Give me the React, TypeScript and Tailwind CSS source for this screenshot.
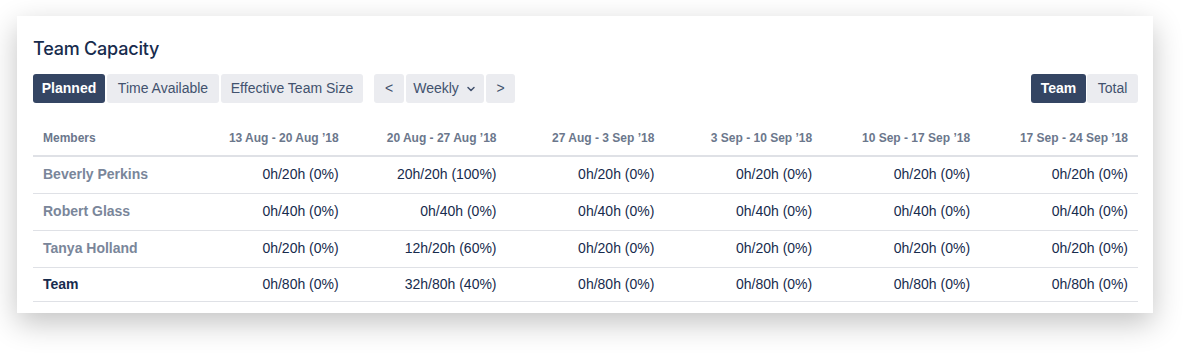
import { ChevronDown } from 'lucide-react';

const weeks = [
  '13 Aug - 20 Aug \u201918',
  '20 Aug - 27 Aug \u201918',
  '27 Aug - 3 Sep \u201918',
  '3 Sep - 10 Sep \u201918',
  '10 Sep - 17 Sep \u201918',
  '17 Sep - 24 Sep \u201918',
];

const rows = [
  { name: 'Beverly Perkins', values: ['0h/20h (0%)', '20h/20h (100%)', '0h/20h (0%)', '0h/20h (0%)', '0h/20h (0%)', '0h/20h (0%)'] },
  { name: 'Robert Glass', values: ['0h/40h (0%)', '0h/40h (0%)', '0h/40h (0%)', '0h/40h (0%)', '0h/40h (0%)', '0h/40h (0%)'] },
  { name: 'Tanya Holland', values: ['0h/20h (0%)', '12h/20h (60%)', '0h/20h (0%)', '0h/20h (0%)', '0h/20h (0%)', '0h/20h (0%)'] },
];

const teamValues = ['0h/80h (0%)', '32h/80h (40%)', '0h/80h (0%)', '0h/80h (0%)', '0h/80h (0%)', '0h/80h (0%)'];

function Btn({ label, active, className = '' }: { label: React.ReactNode; active?: boolean; className?: string }) {
  return (
    <button
      type="button"
      className={`flex h-[29px] items-center justify-center rounded-[3px] text-[14px] ${
        active ? 'bg-[#344563] font-semibold text-white' : 'bg-[#ebecf0] text-[#42526e]'
      } ${className}`}
    >
      {label}
    </button>
  );
}

export default function App() {
  return (
    <div className="h-[361px] w-[1200px] bg-white pl-[17px] pt-[16px] font-['Liberation_Sans',Arial,sans-serif] text-[#172b4d]">
      <section className="h-[297px] w-[1136px] bg-white pl-[16px] pr-[15px] pt-[22px] shadow-[0_10px_28px_rgba(0,0,0,0.24)]">
        <h2 className="font-['Inter',sans-serif] text-[18px] font-medium leading-[22px] tracking-[-0.2px] text-[#172b4d]">
          Team Capacity
        </h2>

        <div className="mt-[14px] flex items-center">
          <div className="flex gap-[2px]">
            <Btn label="Planned" active className="w-[72px]" />
            <Btn label="Time Available" className="w-[112px]" />
            <Btn label="Effective Team Size" className="w-[142px]" />
          </div>
          <div className="ml-[11px] flex gap-[2px]">
            <Btn label="<" className="w-[30px]" />
            <Btn
              label={
                <span className="flex items-center gap-[6px]">
                  Weekly <ChevronDown size={12} strokeWidth={3} />
                </span>
              }
              className="w-[78px]"
            />
            <Btn label=">" className="w-[29px]" />
          </div>
          <div className="ml-auto flex gap-[1px]">
            <Btn label="Team" active className="w-[55px]" />
            <Btn label="Total" className="w-[51px]" />
          </div>
        </div>

        <table className="mt-[18px] w-full table-fixed border-collapse">
          <thead>
            <tr className="h-[35px] border-b-2 border-[#dfe1e6] text-[12px] font-bold text-[#6b778c]">
              <th className="px-[10px] text-left font-bold">Members</th>
              {weeks.map((w) => (
                <th key={w} className="px-[10px] text-right font-bold">
                  {w}
                </th>
              ))}
            </tr>
          </thead>
          <tbody className="text-[14px]">
            {rows.map((r) => (
              <tr key={r.name} className="h-[37px] border-b border-[#dfe1e6]">
                <td className="px-[10px] font-bold text-[#7a869a]">{r.name}</td>
                {r.values.map((v, i) => (
                  <td key={i} className="px-[10px] text-right">
                    {v}
                  </td>
                ))}
              </tr>
            ))}
            <tr className="h-[34px] border-b border-[#dfe1e6]">
              <td className="px-[10px] font-bold text-[#172b4d]">Team</td>
              {teamValues.map((v, i) => (
                <td key={i} className="px-[10px] text-right">
                  {v}
                </td>
              ))}
            </tr>
          </tbody>
        </table>
      </section>
    </div>
  );
}
